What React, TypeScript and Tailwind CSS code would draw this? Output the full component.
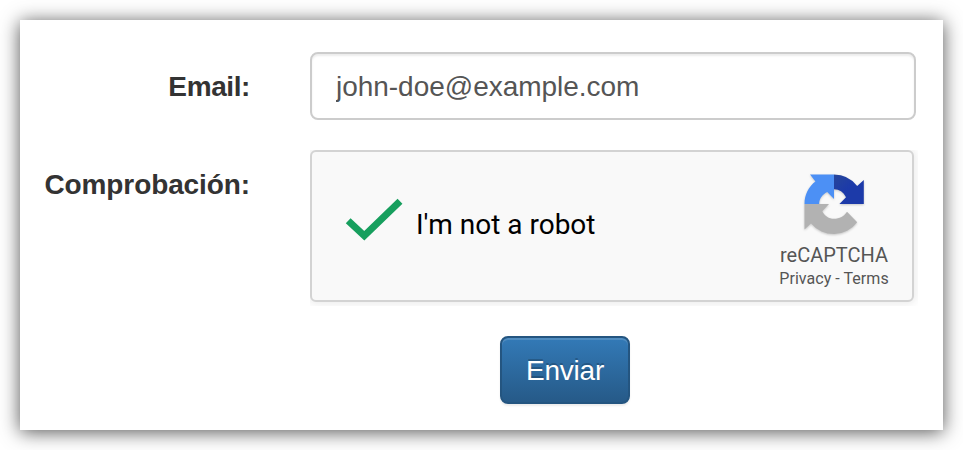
function RecaptchaLogo() {
  return (
    <svg className="h-[62px] w-[62px] overflow-visible drop-shadow-[0_1px_1px_rgba(0,0,0,0.2)]" viewBox="803 173 62 62">
      <defs>
        <linearGradient id="dark" x1="0" x2="0.45" y1="0" y2="0.5">
          <stop offset="0" stopColor="#27469a" />
          <stop offset="1" stopColor="#1c3aa9" />
        </linearGradient>
      </defs>
      <path fill="url(#dark)" d="M834 174.5A29.5 29.5 0 0 1 857.2 186L863.8 180V204H839.4L846 197.2C843.5 192.2 839.3 189.3 834 189.3Z" />
      <path fill="#4c90f5" d="M810 174.5H834V199L827.2 191.9C822.3 194.3 819.2 198.5 819.2 204H804.5C804.5 194.8 808.5 186.8 815.4 181.5Z" />
      <path fill="#b2b2b2" d="M804.5 204H829L822.3 211.2C824.8 215.8 828.7 218.8 834 218.8C839.5 218.8 844.3 216.2 847 211.8L857.2 222.3A29.5 29.5 0 0 1 811 223.6L804.5 229.5Z" />
    </svg>
  );
}

export default function App() {
  return (
    <main className="h-[450px] w-[963px] overflow-hidden bg-white p-5 font-['Liberation_Sans',sans-serif]">
      <form className="h-[410px] w-[923px] bg-white pt-8 shadow-[0_2px_18px_rgba(0,0,0,0.68)]" onSubmit={(event) => event.preventDefault()}>
        <div className="flex h-[68px] items-center">
          <label htmlFor="email" className="mr-[60px] w-[230px] pt-0.5 text-right text-[28px] leading-10 font-bold tracking-[-0.4px] text-[#333]">Email:</label>
          <input id="email" type="email" defaultValue="john-doe@example.com" className="h-[68px] w-[606px] rounded-lg border-2 border-[#ccc] bg-white px-6 pt-0.5 text-[28px] tracking-[-0.03px] text-[#555] shadow-[inset_0_2px_2px_rgba(0,0,0,0.075)] outline-none" />
        </div>
        <div className="mt-[30px] flex h-[156px]">
          <div className="mr-[60px] w-[230px] pt-[15px] text-right text-[28px] leading-10 font-bold tracking-[-0.1px] text-[#333]">Comprobación:</div>
          <div className="h-[156px] w-[608px] overflow-hidden">
            <div className="flex h-[152px] w-[604px] justify-between rounded-md border-2 border-[#d3d3d3] bg-[#f9f9f9] pr-[23px] pl-[33px] font-[Roboto,sans-serif] shadow-[0_0_8px_2px_rgba(0,0,0,0.08)]">
              <div className="flex pt-[43px]">
                <svg className="h-[48px] w-[60px]" viewBox="0 0 60 48" fill="none">
                  <path d="M3.2 25.8L19.3 40.8L55 6.3" stroke="#179f5e" strokeWidth="7" />
                </svg>
                <span className="ml-[11px] pt-3 text-[28px] leading-9 text-black">I&apos;m not a robot</span>
              </div>
              <div className="flex w-[110px] flex-col items-center pt-[21px] text-[#555]">
                <RecaptchaLogo />
                <span className="mt-2 text-[20px] leading-6">reCAPTCHA</span>
                <span className="text-[16px] leading-6 tracking-[0.05px] whitespace-nowrap">Privacy - Terms</span>
              </div>
            </div>
          </div>
        </div>
        <div className="mt-[30px] pl-[480px]">
          <button type="submit" className="h-[68px] w-[130px] rounded-lg border-2 border-[#245580] bg-linear-to-b from-[#337ab7] to-[#265a88] pt-0.5 text-[28px] tracking-[-0.2px] text-white shadow-[inset_0_2px_0_rgba(255,255,255,0.15),0_2px_2px_rgba(0,0,0,0.075)] [text-shadow:0_-2px_0_rgba(0,0,0,0.2)]">Enviar</button>
        </div>
      </form>
    </main>
  );
}
